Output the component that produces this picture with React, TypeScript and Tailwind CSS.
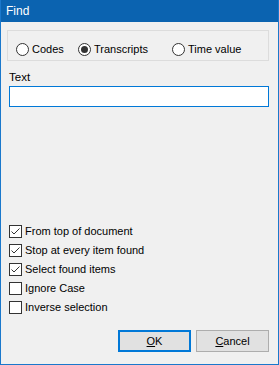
import React from "react";

const font = { fontFamily: '"Liberation Sans", Arial, sans-serif' };

function Radio({ label, checked, width }: { label: string; checked?: boolean; width: string }) {
  return (
    <label className={`flex shrink-0 items-center gap-[3px] ${width}`}>
      <span className="flex h-[13px] w-[13px] items-center justify-center rounded-full border border-[#333] bg-white">
        {checked && <span className="h-[7px] w-[7px] rounded-full bg-[#333]" />}
      </span>
      <span>{label}</span>
    </label>
  );
}

function Check({ label, checked }: { label: string; checked?: boolean }) {
  return (
    <label className="flex h-[19px] items-center gap-[3px]">
      <span className="flex h-[13px] w-[13px] items-center justify-center border border-[#333] bg-white">
        {checked && (
          <svg width="11" height="11" viewBox="0 0 11 11">
            <path d="M1.5 5.5 L4 8 L9.5 2.5" fill="none" stroke="#333" strokeWidth="1" />
          </svg>
        )}
      </span>
      <span>{label}</span>
    </label>
  );
}

export default function App() {
  return (
    <div
      className="flex h-[365px] w-[279px] flex-col border-x border-b border-[#1a78cc] bg-[#f0f0f0] text-[11px] leading-[15px] text-black"
      style={font}
    >
      <div className="flex h-[22px] shrink-0 items-center bg-[#0b63b0] pl-[5px] text-[12px] text-white">Find</div>

      <div className="flex flex-1 flex-col pl-[6px] pr-[9px]">
        <div className="mt-[8px] flex h-[31px] items-start border border-[#dcdcdc] pl-[8px] pt-[11px]">
          <Radio label="Codes" width="w-[62px]" />
          <Radio label="Transcripts" checked width="w-[94px]" />
          <Radio label="Time value" width="w-[80px]" />
        </div>

        <div className="ml-[2px] mt-[9px] text-[11.5px]">Text</div>
        <input className="ml-[2px] mt-[1px] h-[21px] border border-[#0078d7] bg-white outline-none" />

        <div className="flex-1" />

        <div className="ml-[2px] flex flex-col">
          <Check label="From top of document" checked />
          <Check label="Stop at every item found" checked />
          <Check label="Select found items" checked />
          <Check label="Ignore Case" />
          <Check label="Inverse selection" />
        </div>

        <div className="mb-[12px] mt-[13px] flex justify-end gap-[5px]">
          <button className="h-[22px] w-[73px] border-2 border-[#0078d7] bg-[#e1e1e1]">
            <u>O</u>K
          </button>
          <button className="h-[22px] w-[73px] border border-[#adadad] bg-[#e1e1e1]">
            <u>C</u>ancel
          </button>
        </div>
      </div>
    </div>
  );
}
